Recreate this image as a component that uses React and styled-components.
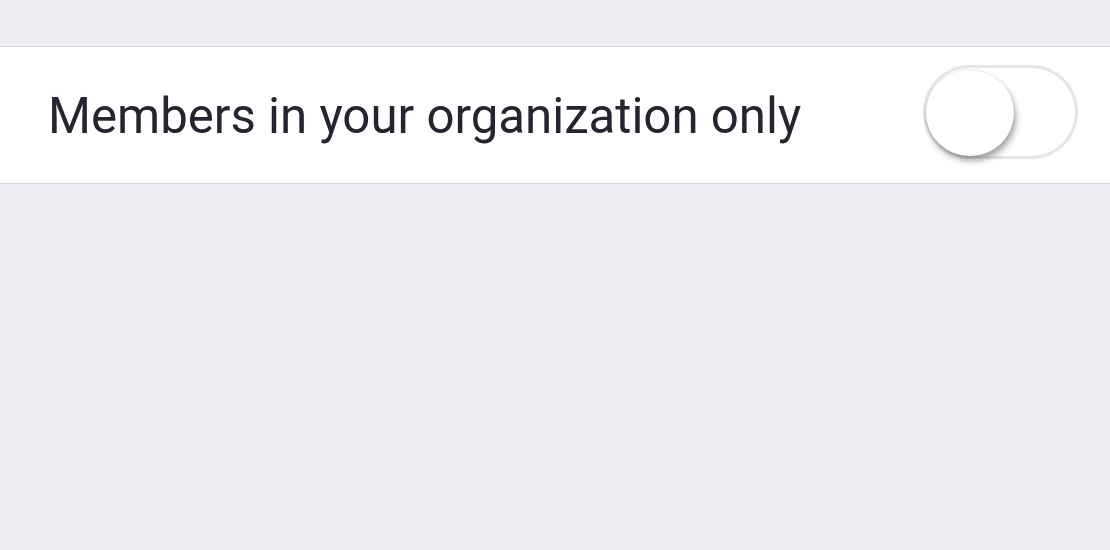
import React, { useState } from 'react';
import styled, { createGlobalStyle } from 'styled-components';

const GlobalStyle = createGlobalStyle`
  html, body {
    margin: 0;
    padding: 0;
    background: #efeef3;
  }
  body {
    font-family: Roboto, "Noto Sans", "Liberation Sans", sans-serif;
  }
`;

const Page = styled.div`
  width: 1110px;
  height: 550px;
  background: #efeef3;
  padding-top: 46px;
  box-sizing: border-box;
  overflow: hidden;
`;

const Row = styled.div`
  display: flex;
  align-items: center;
  justify-content: space-between;
  height: 136px;
  background: #ffffff;
  border-top: 1.5px solid #d6d6da;
  border-bottom: 1.5px solid #d6d6da;
  padding: 0 32px 0 48px;
`;

const Label = styled.span`
  font-size: 49.2px;
  color: #25252f;
  line-height: 1;
  margin-top: 4px;
`;

const Track = styled.button`
  position: relative;
  width: 155px;
  height: 94px;
  border-radius: 47px;
  border: 3px solid #e6e6e8;
  background: ${props => (props.on ? '#4cd964' : '#ffffff')};
  padding: 0;
  cursor: pointer;
  box-sizing: border-box;
  margin-top: -7px;
`;

const Knob = styled.span`
  position: absolute;
  top: 2px;
  left: ${props => (props.on ? '61px' : '0px')};
  width: 88px;
  height: 86px;
  border-radius: 50%;
  background: #ffffff;
  box-shadow: 2px 5px 6px rgba(0, 0, 0, 0.35), 0 0 2px rgba(0, 0, 0, 0.15);
  transition: left 0.2s ease;
`;

export default function App() {
  const [on, setOn] = useState(false);
  return (
    <Page>
      <GlobalStyle />
      <Row>
        <Label>Members in your organization only</Label>
        <Track on={on ? 1 : 0} onClick={() => setOn(!on)} aria-label="Members in your organization only">
          <Knob on={on ? 1 : 0} />
        </Track>
      </Row>
    </Page>
  );
}
